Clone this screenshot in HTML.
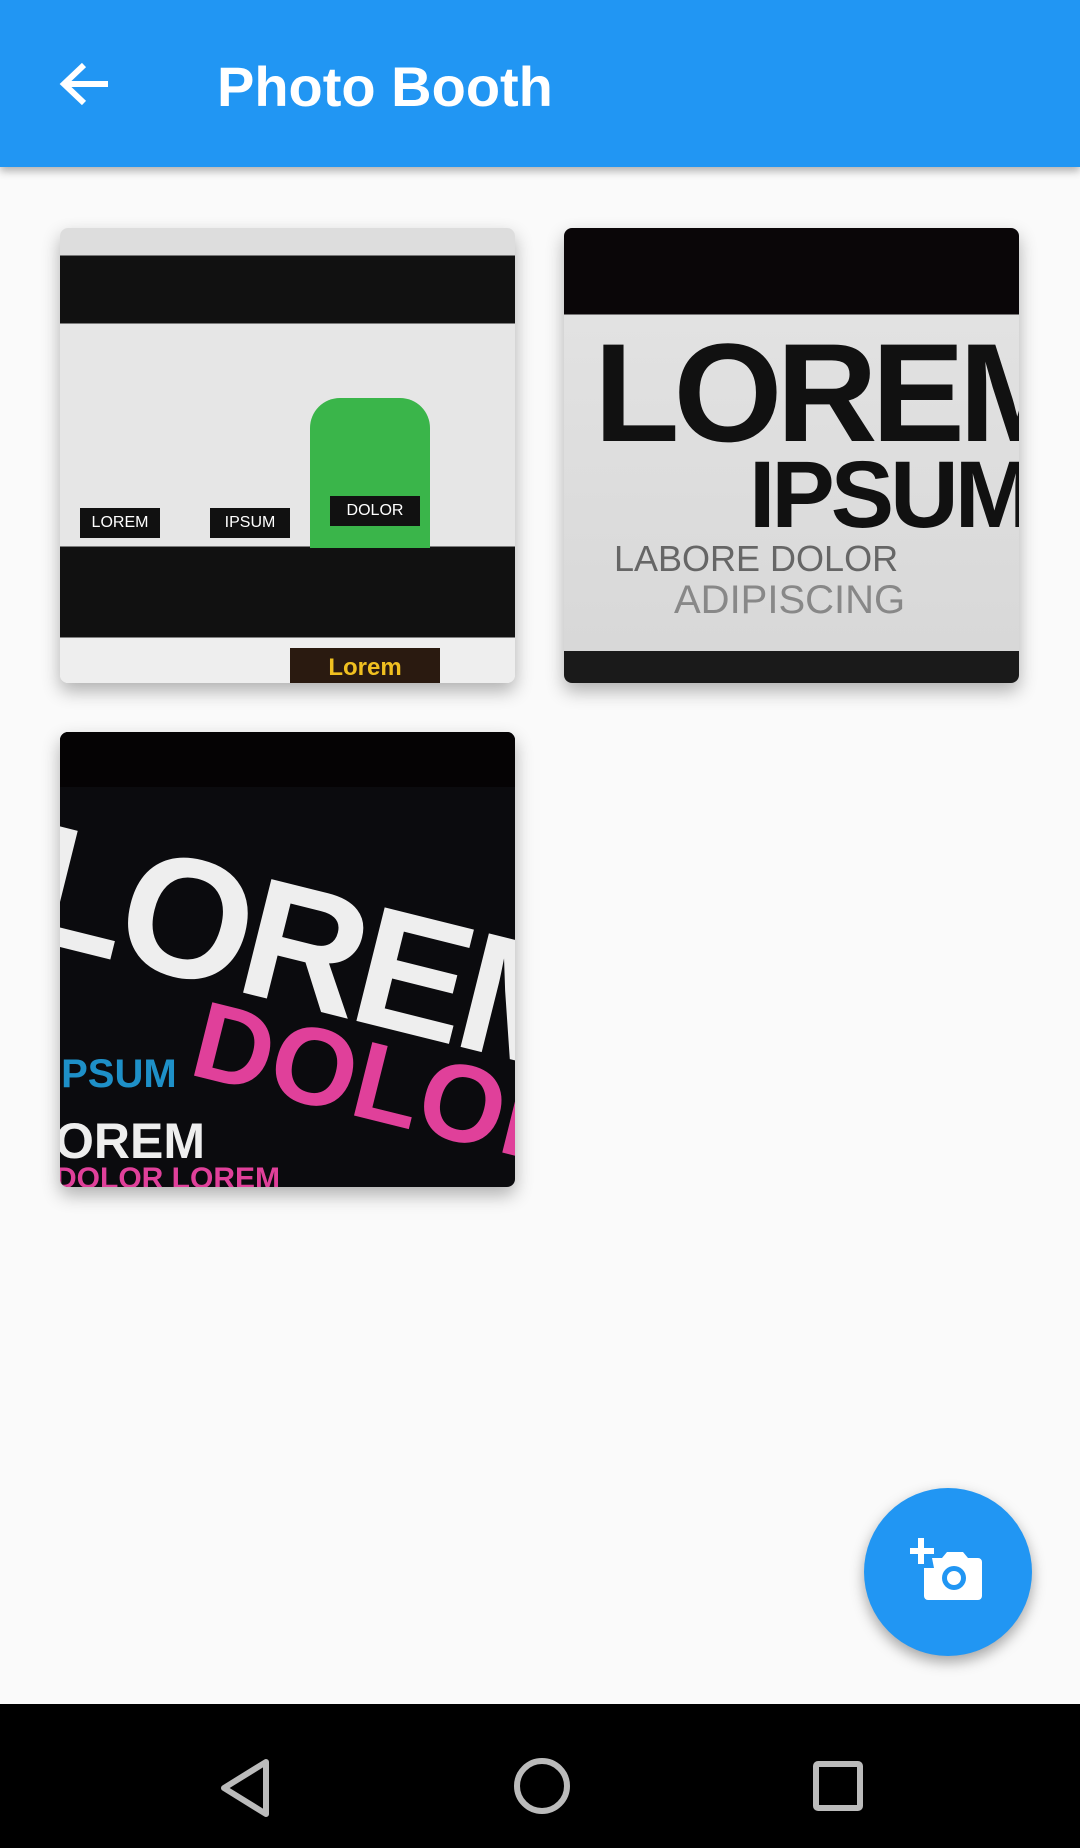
<!DOCTYPE html>
<html><head><meta charset="utf-8"><style>
*{margin:0;padding:0;box-sizing:border-box}
body{width:1080px;height:1848px;background:#fafafa;font-family:"Liberation Sans",sans-serif;position:relative;overflow:hidden}
.bar{position:absolute;left:0;top:0;width:1080px;height:167px;background:#2196f3;box-shadow:0 4px 8px rgba(0,0,0,.3);z-index:2}
.bar h1{position:absolute;left:217px;top:54px;color:#fff;font-size:56px;font-weight:bold;letter-spacing:0px}
.card{position:absolute;width:455px;height:455px;border-radius:8px;overflow:hidden;box-shadow:0 8px 18px rgba(0,0,0,.3)}
.c1{left:60px;top:228px;background:linear-gradient(#ddd 0,#ddd 6%,#111 6%,#111 21%,#e6e6e6 21%,#e6e6e6 70%,#111 70%,#111 90%,#eee 90%)}
.c2{left:564px;top:228px;background:linear-gradient(#0a0608 0,#0a0608 19%,#e2e2e2 19%,#d8d8d8 93%,#1a1a1a 93%)}
.c3{left:60px;top:732px;background:#0b0b0e}
.fab{position:absolute;left:864px;top:1488px;width:168px;height:168px;border-radius:50%;background:#2196f3;box-shadow:0 6px 14px rgba(0,0,0,.35)}
.nav{position:absolute;left:0;top:1704px;width:1080px;height:144px;background:#000}
</style></head><body>
<div class="bar">
<svg style="position:absolute;left:58px;top:60px" width="54" height="48" viewBox="0 0 54 48"><path d="M50 24H8M26 5L6 24l20 19" stroke="#fff" stroke-width="6" fill="none"/></svg>
<h1>Photo Booth</h1>
</div>
<div class="card c1">
<div style="position:absolute;left:20px;top:280px;width:80px;height:30px;background:#111;color:#fff;font-size:16px;text-align:center;line-height:30px">LOREM</div>
<div style="position:absolute;left:150px;top:280px;width:80px;height:30px;background:#111;color:#fff;font-size:16px;text-align:center;line-height:30px">IPSUM</div>
<div style="position:absolute;left:250px;top:170px;width:120px;height:150px;background:#3ab54a;border-radius:30px 30px 0 0"></div>
<div style="position:absolute;left:270px;top:268px;width:90px;height:30px;background:#111;color:#fff;font-size:16px;text-align:center;line-height:30px">DOLOR</div>
<div style="position:absolute;left:230px;top:420px;width:150px;height:35px;background:#2a1a10;color:#f0c020;font-size:24px;font-weight:bold;text-align:center;line-height:40px">Lorem Ipsum?</div>
</div>
<div class="card c2">
<div style="position:absolute;left:30px;top:95px;font-size:140px;color:#111;font-weight:bold;letter-spacing:-6px;line-height:1">LOREM</div>
<div style="position:absolute;left:185px;top:220px;font-size:95px;color:#111;font-weight:bold;letter-spacing:-4px;line-height:1">IPSUM</div>
<div style="position:absolute;left:50px;top:310px;font-size:36px;color:#666">LABORE DOLOR</div>
<div style="position:absolute;left:110px;top:350px;font-size:40px;color:#888">ADIPISCING</div>
</div>
<div class="card c3">
<div style="position:absolute;left:0;top:0;width:455px;height:55px;background:#050304"></div>
<div style="position:absolute;left:-40px;top:120px;transform:rotate(14deg);font-size:170px;font-weight:bold;color:#eee;letter-spacing:-6px">LOREM</div>
<div style="position:absolute;left:-10px;top:320px;font-size:40px;font-weight:bold;color:#1e90c8">IPSUM</div>
<div style="position:absolute;left:130px;top:290px;transform:rotate(14deg);font-size:110px;font-weight:bold;color:#e0409a">DOLOR</div>
<div style="position:absolute;left:-5px;top:380px;font-size:50px;font-weight:bold;color:#eee">OREM</div>
<div style="position:absolute;left:-5px;top:430px;font-size:30px;font-weight:bold;color:#e0409a">DOLOR LOREM</div>
</div>
<div class="fab">
<svg style="position:absolute;left:46px;top:50px" width="74" height="64" viewBox="0 0 74 64"><path d="M8 0v10H0v6h8v10h6V16h10v-6H14V0z" fill="#fff"/><path d="M22 20h10l5-6h16l5 6h10a4 4 0 0 1 4 4v34a4 4 0 0 1-4 4H18a4 4 0 0 1-4-4V30h10z" fill="#fff"/><circle cx="44" cy="40" r="12" fill="#2196f3"/><circle cx="44" cy="40" r="7" fill="#fff"/></svg>
</div>
<div class="nav">
<svg style="position:absolute;left:218px;top:54px" width="54" height="60" viewBox="0 0 54 60"><path d="M48 4L6 30l42 26z" stroke="#bbb" stroke-width="6" fill="none" stroke-linejoin="round"/></svg>
<svg style="position:absolute;left:512px;top:52px" width="60" height="60"><circle cx="30" cy="30" r="25" stroke="#bbb" stroke-width="6" fill="none"/></svg>
<svg style="position:absolute;left:812px;top:56px" width="52" height="52"><rect x="4" y="4" width="44" height="44" rx="2" stroke="#bbb" stroke-width="6" fill="none"/></svg>
</div>
</body></html>
